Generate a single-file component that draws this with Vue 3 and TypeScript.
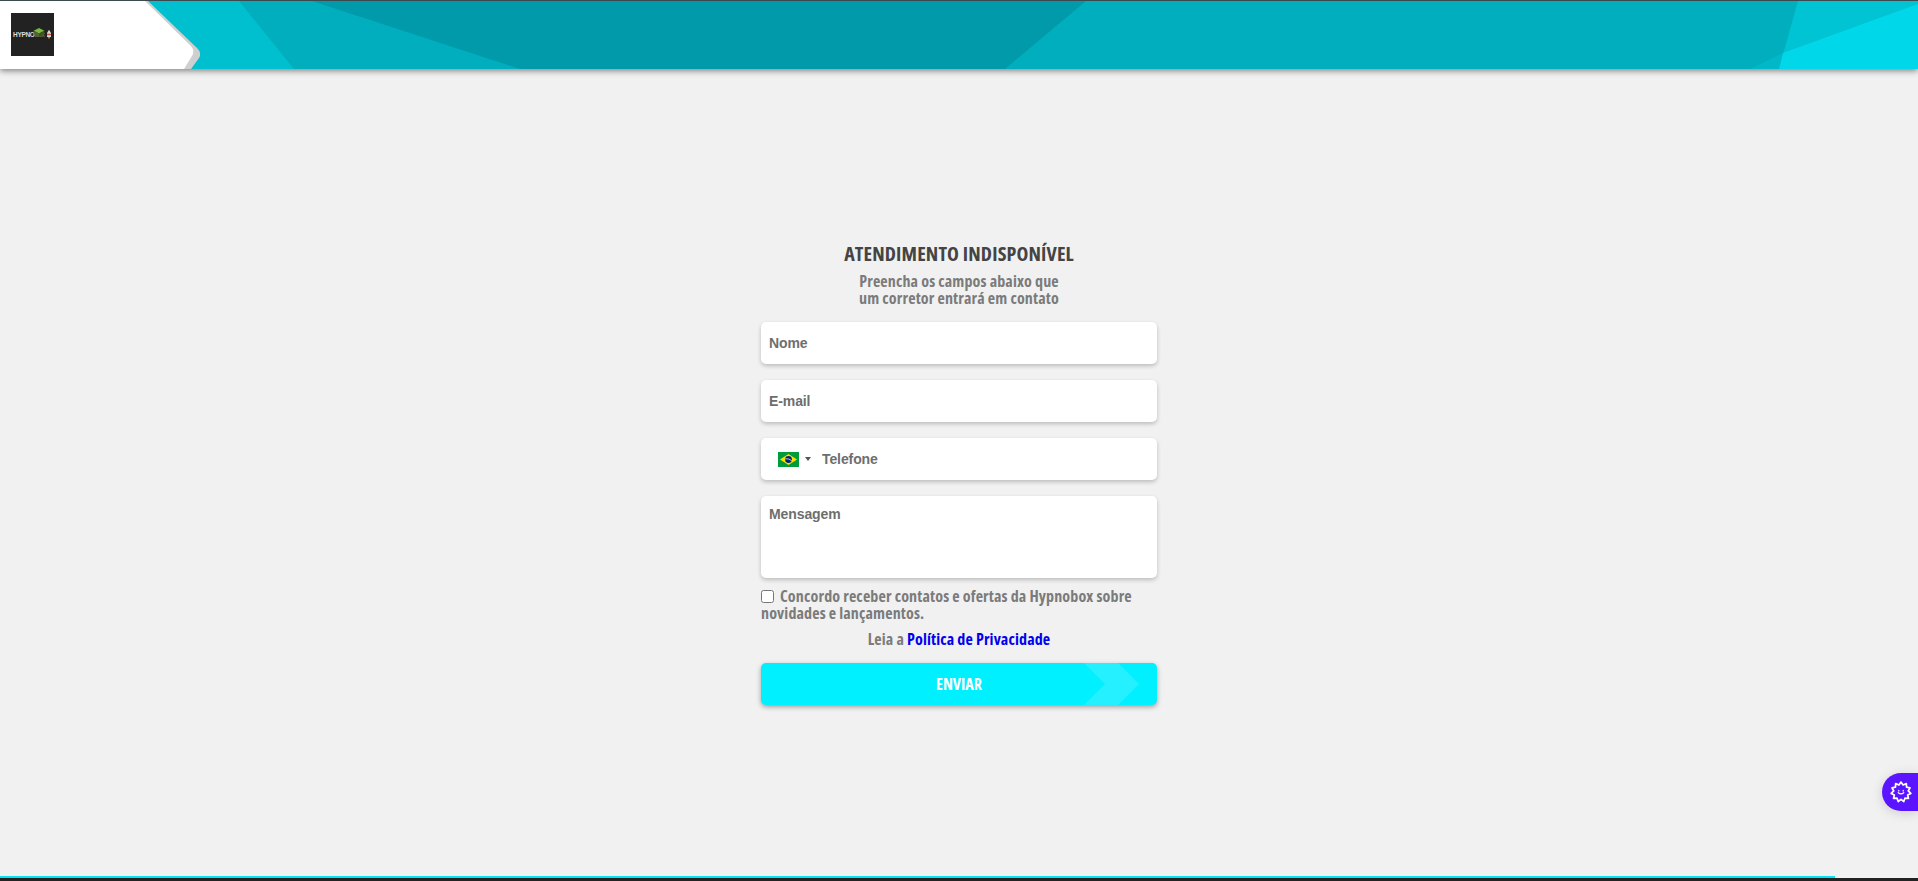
<script setup lang="ts">
const fields = [
  { id: 'nome', label: 'Nome' },
  { id: 'email', label: 'E-mail' }
]

// wavy outline of the little gear on the widget
const bumps = 11
const gearPath = Array.from({ length: bumps * 2 }, (_, i) => {
  const a = (i * Math.PI) / bumps - Math.PI / 2
  const r = i % 2 === 0 ? 10.8 : 8
  const x = (12 + r * Math.cos(a)).toFixed(2)
  const y = (12 + r * Math.sin(a)).toFixed(2)
  return `${i === 0 ? 'M' : 'L'}${x} ${y}`
}).join(' ') + 'Z'
</script>

<template>
  <div class="page">
    <header class="topbar">
      <svg class="topbar-bg" viewBox="0 0 1918 68" preserveAspectRatio="none" aria-hidden="true">
        <rect width="1918" height="68" fill="#00bfcf" />
        <polygon points="239,0 1918,0 1918,68 294,68" fill="#00aebd" />
        <polygon points="312,0 1086,0 1005,68 520,68" fill="#009aaa" />
        <polygon points="1798,0 1918,0 1918,68 1779,68" fill="#00c4d4" />
        <polygon points="1783,52 1779,68 1750,68" fill="#00b8c8" />
        <polygon points="1918,3 1918,68 1779,68 1783,52" fill="#00d8ea" />
        <path d="M0 0H148L197 47Q202 52 199 57L191 68H0Z" fill="#cfcfcf" />
        <path d="M0 0H145L191 45Q195 50 192 55L184 68H0Z" fill="#fff" />
      </svg>
      <div class="logo">
        <span class="logo-text">HYPNO<em>BOX</em></span>
        <svg class="logo-cube" viewBox="0 0 12 10"><polygon points="6,0 12,3 6,6 0,3" fill="#7db83e" /><polygon points="0,3 6,6 6,10 0,7" fill="#4d6b2a" /><polygon points="12,3 6,6 6,10 12,7" fill="#3d5522" /></svg>
        <svg class="logo-rocket" viewBox="0 0 5 12"><path d="M2.5 0 5 4V9H0V4Z" fill="#d8d8d8" /><rect y="5" width="5" height="2" fill="#c0563a" /><path d="M1 9H4L2.5 12Z" fill="#e2702a" /></svg>
      </div>
    </header>

    <main class="content">
      <form class="contact" @submit.prevent>
        <h1>ATENDIMENTO INDISPONÍVEL</h1>
        <p class="subtitle">Preencha os campos abaixo que<br />um corretor entrará em contato</p>

        <input v-for="f in fields" :key="f.id" class="field" type="text" :placeholder="f.label" />

        <div class="field phone">
          <svg class="flag" viewBox="0 0 21 15" aria-hidden="true">
            <rect width="21" height="15" fill="#009b3a" />
            <polygon points="10.5,2 19,7.5 10.5,13 2,7.5" fill="#fedf00" />
            <circle cx="10.5" cy="7.5" r="3.4" fill="#002776" />
            <path d="M7.3 6.8Q10.5 6.2 13.7 8.6" stroke="#fff" stroke-width=".7" fill="none" />
          </svg>
          <span class="caret"></span>
          <input type="text" placeholder="Telefone" />
        </div>

        <textarea class="field message" placeholder="Mensagem"></textarea>

        <label class="consent">
          <input type="checkbox" />
          <span>Concordo receber contatos e ofertas da Hypnobox sobre novidades e lançamentos.</span>
        </label>
        <p class="privacy">Leia a <a href="#">Política de Privacidade</a></p>

        <button class="send" type="submit">
          <svg class="chevrons" viewBox="0 0 60 42" aria-hidden="true">
            <polygon points="1,0 35,0 56,21 35,42 1,42 22,21" fill="#24f0ff" />
          </svg>
          <span>ENVIAR</span>
        </button>
      </form>
    </main>

    <button class="widget" aria-label="Acessibilidade">
      <svg viewBox="0 0 24 24" width="22" height="22" fill="none" stroke="#fff" stroke-width="1.9" stroke-linejoin="round">
        <path :d="gearPath" />
        <path d="M9 12.8q3 2.4 6 0M9.6 10.2v.8M14.4 10.2v.8" stroke-width="1.3" stroke-linecap="round" />
      </svg>
    </button>

    <footer class="bottom">
      <div class="progress"></div>
    </footer>
  </div>
</template>

<style scoped>
.page {
  height: 881px;
  display: flex;
  flex-direction: column;
  background: #f1f1f1;
  overflow: hidden;
  position: relative;
  font-family: "Open Sans", "Liberation Sans", sans-serif;
}

.topbar {
  flex: none;
  border-top: 1px solid #3b4a4e;
  box-sizing: border-box;
  height: 69px;
  position: relative;
  display: flex;
  align-items: flex-start;
  padding: 12px 0 0 11px;
  box-shadow: 0 2px 6px rgba(0, 0, 0, .45);
}

.topbar-bg {
  position: absolute;
  inset: 0;
  width: 100%;
  height: 100%;
}

.logo {
  position: relative;
  width: 43px;
  height: 43px;
  box-sizing: border-box;
  background: #222;
  display: flex;
  align-items: center;
  padding-left: 2px;
}

.logo-text {
  font: bold 6.5px "Liberation Sans", sans-serif;
  color: #ddd;
  letter-spacing: -.3px;
  white-space: nowrap;
}

.logo-text em {
  font-style: normal;
  font-size: 5px;
  color: #777;
}

.logo-cube {
  flex: none;
  width: 12px;
  height: 9px;
  margin: -5px 0 0 -12px;
}

.logo-rocket {
  flex: none;
  width: 4px;
  height: 11px;
  margin-left: 2px;
}

.content {
  flex: 1;
  display: flex;
  justify-content: center;
}

.contact {
  width: 396px;
  display: flex;
  flex-direction: column;
  padding-top: 173px;
  color: #7b7b7b;
  font-stretch: condensed;
  font-weight: 700;
  letter-spacing: .14px;
}

h1 {
  margin: 0;
  text-align: center;
  font-size: 20px;
  line-height: 24px;
  font-weight: 700;
  color: #444;
}

.subtitle {
  margin: 7px 0 15px;
  text-align: center;
  font-size: 16px;
  line-height: 17px;
}

.field {
  box-sizing: border-box;
  height: 42px;
  margin-bottom: 16px;
  border: none;
  border-radius: 5px;
  background: #fff;
  box-shadow: 0 2px 4px rgba(0, 0, 0, .22);
  padding: 0 8px;
  font: bold 14px "Liberation Sans", sans-serif;
  letter-spacing: -.1px;
  color: #6e6e6e;
  outline: none;
  width: 100%;
}

.field::placeholder,
.phone input::placeholder {
  color: #6e6e6e;
  opacity: 1;
}

.phone {
  display: flex;
  align-items: center;
  padding-left: 17px;
}

.flag {
  width: 21px;
  height: 15px;
}

.caret {
  margin-left: 6px;
  border: 3px solid transparent;
  border-top: 4px solid #555;
  border-bottom: 0;
}

.phone input {
  flex: 1;
  min-width: 0;
  border: none;
  outline: none;
  padding: 0;
  margin-left: 11px;
  font: inherit;
  letter-spacing: inherit;
}

.message {
  height: 82px;
  padding-top: 10px;
  resize: none;
  margin-bottom: 10px;
  display: block;
}

.consent {
  display: block;
  font-size: 16px;
  line-height: 17px;
}

.consent input {
  width: 13px;
  height: 13px;
  margin: 0 6px 0 0;
  vertical-align: -1px;
}

.privacy {
  margin: 7px 0 14px;
  text-align: center;
  font-size: 16px;
  line-height: 20px;
}

.privacy a {
  color: #0000ee;
  text-decoration: none;
}

.send {
  position: relative;
  height: 42px;
  border: none;
  border-radius: 5px;
  background: #00f0ff;
  box-shadow: 0 2px 5px rgba(0, 0, 0, .35);
  color: #fff;
  font-family: inherit;
  font-stretch: condensed;
  font-weight: 700;
  font-size: 16px;
  overflow: hidden;
  padding: 0;
}

.chevrons {
  position: absolute;
  right: 14px;
  top: 0;
  width: 60px;
  height: 42px;
}

.send span {
  position: relative;
}

.widget {
  position: absolute;
  right: 0;
  top: 773px;
  width: 36px;
  height: 38px;
  border: none;
  padding: 0 0 0 2px;
  border-radius: 19px 0 0 19px;
  background: #5a14ff;
  box-shadow: 0 2px 12px rgba(0, 0, 0, .15);
  display: flex;
  align-items: center;
  justify-content: center;
}

.bottom {
  flex: none;
  height: 5px;
  box-sizing: border-box;
  border-bottom: 3px solid #222;
}

.progress {
  width: 1835px;
  height: 2px;
  background: #00e5f5;
}
</style>

<style>
html,
body {
  margin: 0;
  background: #f1f1f1;
}
</style>
